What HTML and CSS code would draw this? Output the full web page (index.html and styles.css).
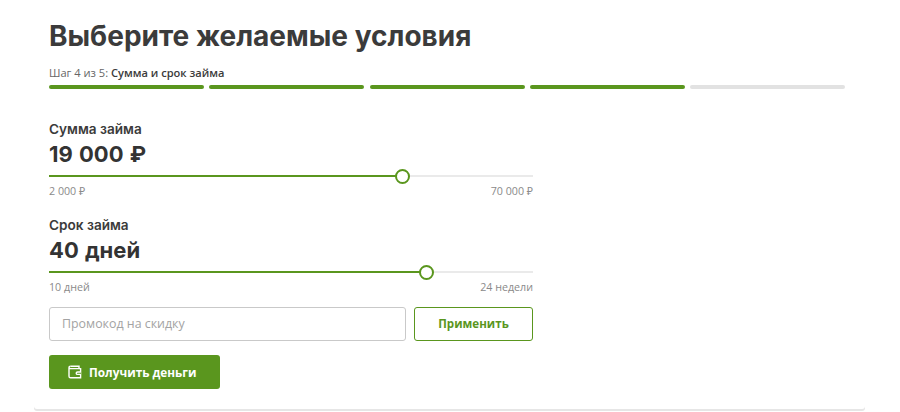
FILE: index.html
```html
<!DOCTYPE html>
<html lang="ru">
<head>
<meta charset="utf-8">
<title>Выберите желаемые условия</title>
<link rel="stylesheet" href="styles.css">
</head>
<body>
<main class="card">
  <h1 class="title">Выберите желаемые условия</h1>
  <p class="step">Шаг 4 из 5: <b>Сумма и срок займа</b></p>
  <div class="progress">
    <span class="seg done"></span><span class="seg done"></span><span class="seg done"></span><span class="seg done"></span><span class="seg"></span>
  </div>
  <div class="form">
    <section class="field first">
      <div class="label">Сумма займа</div>
      <div class="value">19 000 ₽</div>
      <div class="slider"><div class="fill" style="width:73.2%"><span class="thumb"></span></div></div>
      <div class="range"><span>2 000 ₽</span><span>70 000 ₽</span></div>
    </section>
    <section class="field">
      <div class="label">Срок займа</div>
      <div class="value">40 дней</div>
      <div class="slider"><div class="fill" style="width:78.2%"><span class="thumb"></span></div></div>
      <div class="range"><span>10 дней</span><span>24 недели</span></div>
    </section>
    <div class="promo">
      <input class="promo-input" type="text" placeholder="Промокод на скидку">
      <button class="apply" type="button">Применить</button>
    </div>
    <button class="submit" type="button">
      <svg class="wallet" width="14" height="14" viewBox="0 0 14 14" fill="none" stroke="currentColor" stroke-width="1.4"><path d="M2.5 1.2H11V3.6"/><path d="M1 3V11.2C1 12.2 1.6 12.8 2.6 12.8H12.6V3.6H2.2C1.5 3.6 1 3.3 1 2.6C1 1.8 1.6 1.2 2.5 1.2"/><path d="M13 7H9.6C8.7 7 8.2 7.5 8.2 8.2C8.2 8.9 8.7 9.4 9.6 9.4H13" fill="#5a961e"/></svg>
      <span>Получить деньги</span>
    </button>
  </div>
</main>
</body>
</html>
```
FILE: styles.css
```css
* { box-sizing: border-box; }
html, body { margin: 0; background: #fff; }
body { width: 900px; height: 412px; overflow: hidden; font-family: "Open Sans", "Noto Sans", sans-serif; color: #333; }
.card {
  width: 831px;
  height: 409px;
  margin-left: 34px;
  padding: 18px 20px 0 15px;
  border-radius: 0 0 3px 3px;
  background: #fff;
  box-shadow: 0 2px 0 #e6e6e6;
}
.title { margin: 0; font: 700 28px/36px Inter, "Open Sans", sans-serif; color: #3b3b3b; }
.step { margin: 12px 0 0; font-size: 11.1px; line-height: 14px; color: #666; }
.step b { font-weight: 600; color: #3b3b3b; }
.progress { display: flex; gap: 5.25px; margin-top: 5px; }
.seg { flex: 1; height: 3.5px; border-radius: 2px; background: #e2e2e2; }
.seg.done { background: #5a961e; }
.form { width: 484px; }
.field { margin-top: 18px; }
.field.first { margin-top: 31px; }
.label { font: 600 13.6px/18px Inter, "Open Sans", sans-serif; color: #3b3b3b; }
.value { margin-top: 3px; font: 700 22px/26px Inter, "Open Sans", sans-serif; word-spacing: 1px; color: #333; }
.slider { height: 2px; margin-top: 8px; background: #eaeaea; }
.fill { position: relative; height: 2px; background: #5a961e; }
.thumb {
  position: absolute;
  right: -7px;
  top: -6px;
  width: 15px;
  height: 15px;
  border: 2.5px solid #5a961e;
  border-radius: 50%;
  background: #fff;
}
.range { display: flex; justify-content: space-between; margin-top: 7px; font-size: 10.7px; line-height: 14px; color: #8a8a8a; }
.promo { display: flex; gap: 8px; margin-top: 13px; }
.promo-input {
  width: 357px;
  height: 34px;
  padding: 0 12px;
  border: 1px solid #c9c9c9;
  border-radius: 3px;
  outline: none;
  font: 400 12.4px "Open Sans", sans-serif;
  color: #333;
}
.promo-input::placeholder { color: #a3a3a3; opacity: 1; }
.apply {
  flex: 1;
  height: 34px;
  padding: 0;
  border: 1px solid #5a961e;
  border-radius: 3px;
  background: #fff;
  font: 700 11.6px "Open Sans", sans-serif;
  color: #5a961e;
}
.submit {
  display: flex;
  align-items: center;
  gap: 7px;
  width: 171px;
  height: 34px;
  margin-top: 14px;
  padding: 0 0 0 19px;
  border: 0;
  border-radius: 3px;
  background: #5a961e;
  font: 700 11.8px "Open Sans", sans-serif;
  color: #fff;
}
```
